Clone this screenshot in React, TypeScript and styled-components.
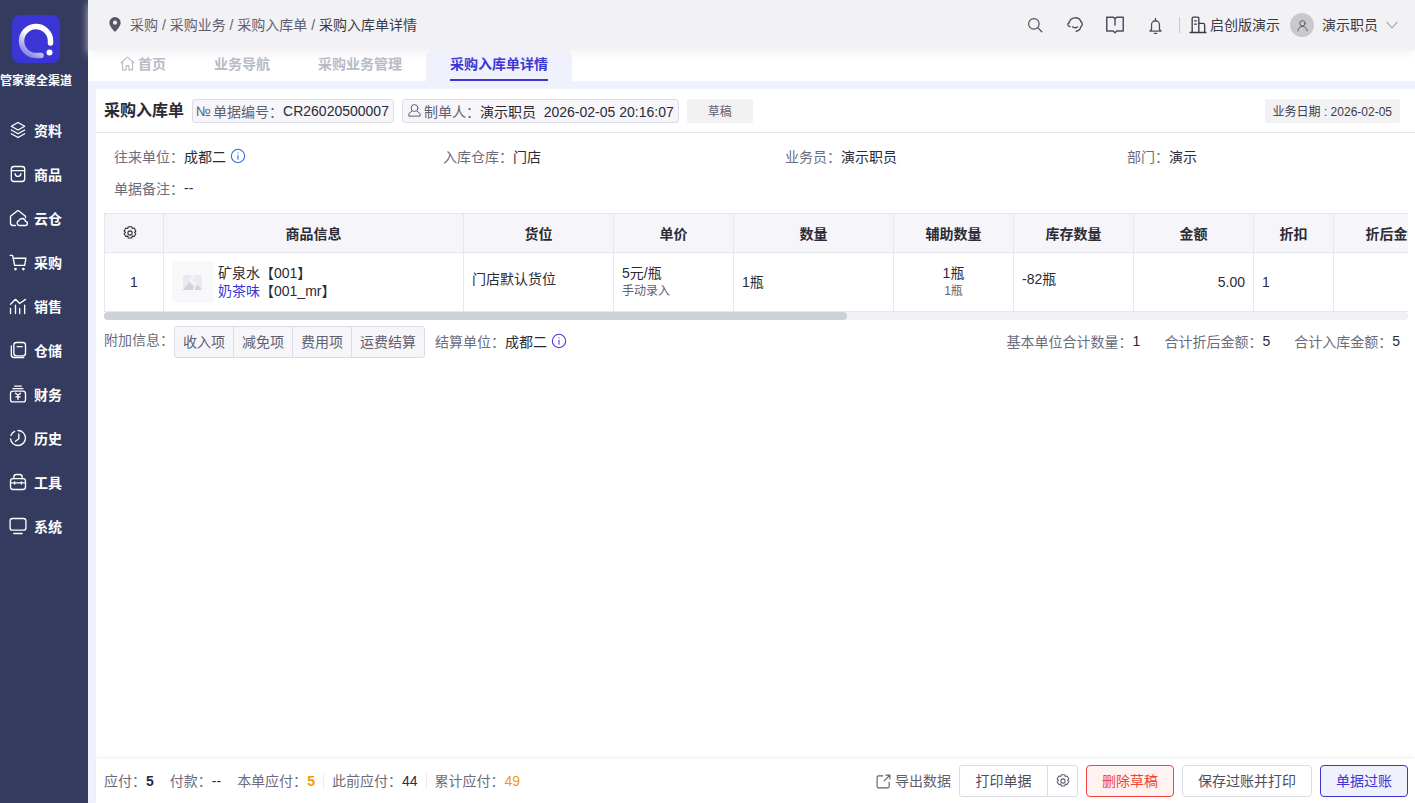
import styled, { createGlobalStyle } from 'styled-components'
import type { ReactNode } from 'react'

const GlobalStyle = createGlobalStyle`
	html, body, #root {
		margin: 0;
		height: 100%;
	}

	body {
		overflow: hidden;
		font-family: "Liberation Sans", "Noto Sans CJK SC", sans-serif;
		font-size: 14px;
		color: #2b2b36;
		background: #fff;
	}

	* {
		box-sizing: border-box;
	}
`

const Line = ({ children, size = 18 }: { children: ReactNode; size?: number }) => (
	<svg
		width={size}
		height={size}
		viewBox="0 0 24 24"
		fill="none"
		stroke="currentColor"
		strokeWidth="1.6"
		strokeLinecap="round"
		strokeLinejoin="round">
		{children}
	</svg>
)

const navItems: { label: string; icon: ReactNode }[] = [
	{
		label: '资料',
		icon: (
			<>
				<path d="M12 3l8 4.5-8 4.5-8-4.5z" />
				<path d="M4 12l8 4.5 8-4.5" />
				<path d="M4 16.5l8 4.5 8-4.5" />
			</>
		),
	},
	{
		label: '商品',
		icon: (
			<>
				<rect x="4" y="3" width="16" height="18" rx="3" />
				<path d="M4 8h16" />
				<path d="M8.5 11.5c.5 4.5 6.5 4.5 7 0" />
			</>
		),
	},
	{
		label: '云仓',
		icon: (
			<>
				<path d="M9 21H6a3 3 0 0 1-3-3V10L11 3.5a2 2 0 0 1 2 0l8 6.5v1.5" />
				<path d="M13.5 21a3 3 0 0 1-.5-5.8 4.2 4.2 0 0 1 8 .8A2.5 2.5 0 0 1 20.5 21z" />
			</>
		),
	},
	{
		label: '采购',
		icon: (
			<>
				<path d="M2.5 4h3l2.5 12h12L21.5 7.5H6" />
				<circle cx="9" cy="20.5" r=".8" />
				<circle cx="18.5" cy="20.5" r=".8" />
			</>
		),
	},
	{
		label: '销售',
		icon: (
			<>
				<path d="M3 10l6-6 5 5 7-5" />
				<path d="M3 15v6M9 11v10M14 15v6M20 11v10" />
			</>
		),
	},
	{
		label: '仓储',
		icon: (
			<>
				<rect x="7" y="3" width="14" height="16" rx="3" />
				<path d="M4 7v11a3 3 0 0 0 3 3h12" />
				<path d="M11 8h6" />
			</>
		),
	},
	{
		label: '财务',
		icon: (
			<>
				<path d="M8 2.5h8M6 5.5h12" />
				<rect x="3" y="8.5" width="18" height="13" rx="3" />
				<path d="M9 11l3 2.5 3-2.5M12 13.5v5M9.5 15.5h5" />
			</>
		),
	},
	{
		label: '历史',
		icon: (
			<>
				<path d="M12 3a9 9 0 1 1-9 10" />
				<path d="M3.5 9A9 9 0 0 1 8 4" />
				<path d="M13 7v6l-4 3" />
			</>
		),
	},
	{
		label: '工具',
		icon: (
			<>
				<rect x="3" y="8" width="18" height="13" rx="3" />
				<path d="M7 8V6a3 3 0 0 1 3-3h4a3 3 0 0 1 3 3v2" />
				<path d="M3 13h18M8 12v2.5M16 12v2.5" />
			</>
		),
	},
	{
		label: '系统',
		icon: (
			<>
				<rect x="2.5" y="3" width="19" height="14" rx="3" />
				<path d="M7 21h10" />
			</>
		),
	},
]

const tabs = ['业务导航', '采购业务管理']

const columns = [
	{ title: '商品信息', width: 300 },
	{ title: '货位', width: 150 },
	{ title: '单价', width: 120 },
	{ title: '数量', width: 160 },
	{ title: '辅助数量', width: 120 },
	{ title: '库存数量', width: 120 },
	{ title: '金额', width: 120 },
	{ title: '折扣', width: 80 },
	{ title: '折后金额', width: 120 },
]

const Gear = ({ size = 16 }: { size?: number }) => (
	<Line size={size}>
		<path d="M9.4 2.5h5.2l.8 2.8 2.8-.7 2.6 4.4-2 2 2 2-2.6 4.4-2.8-.7-.8 2.8H9.4l-.8-2.8-2.8.7-2.6-4.4 2-2-2-2 2.6-4.4 2.8.7z" />
		<circle cx="12" cy="12" r="3.2" />
	</Line>
)

const Info = () => (
	<Line size={16}>
		<circle cx="12" cy="12" r="10" />
		<path d="M12 11v6M12 7.2v.3" />
	</Line>
)

function App() {
	return (
		<Page>
			<GlobalStyle />
			<Sidebar>
				<Logo>
					<svg width="48" height="48" viewBox="0 0 48 48">
						<defs>
							<linearGradient id="ring" x1="0.9" y1="0.1" x2="0.3" y2="1">
								<stop offset="0.45" stopColor="#ffffff" />
								<stop offset="1" stopColor="#8f8be8" />
							</linearGradient>
						</defs>
						<rect width="48" height="48" rx="8" fill="#3b35d6" />
						<path
							d="M38.5 28V25a14.5 14.5 0 1 0-14.5 15.5h5"
							fill="none"
							stroke="url(#ring)"
							strokeWidth="5.5"
							strokeLinecap="round"
						/>
						<circle cx="37.5" cy="37.5" r="3" fill="#fff" />
					</svg>
					<LogoText>管家婆全渠道</LogoText>
				</Logo>
				<Nav>
					{navItems.map(item => (
						<NavItem key={item.label}>
							<Line size={20}>{item.icon}</Line>
							<span>{item.label}</span>
						</NavItem>
					))}
				</Nav>
			</Sidebar>
			<Main>
				<TopBar>
					<Crumbs>
						<svg width="14" height="15" viewBox="0 0 14 16">
							<path
								fillRule="evenodd"
								d="M7 0a6 6 0 0 1 6 6c0 4-4.5 8-6 10C5.5 14 1 10 1 6a6 6 0 0 1 6-6zm0 3.8a2.2 2.2 0 1 0 0 4.4 2.2 2.2 0 0 0 0-4.4z"
								fill="#55566a"
							/>
						</svg>
						<CrumbText>
							采购 / 采购业务 / 采购入库单 / <Current>采购入库单详情</Current>
						</CrumbText>
					</Crumbs>
					<TopTools>
						<ToolIcon>
							<Line size={18}>
								<circle cx="10.5" cy="10.5" r="7" />
								<path d="M15.5 15.5L21 21" />
							</Line>
						</ToolIcon>
						<ToolIcon>
							<Line size={20}>
								<path d="M5 9.5a7.5 7.5 0 0 1 14.5-1" />
								<path d="M4.5 9.5c-2 1-1.5 4 1.5 4.5" />
								<path d="M19.5 8.5c1.8 1 1.8 4-.5 5.5-.5 3-3 5-5.5 5.5" />
								<path d="M9 14c2 1.5 4.5 1.5 6 0" />
							</Line>
						</ToolIcon>
						<ToolIcon>
							<Line size={22}>
								<path d="M3 3.5h7l2 1.5 2-1.5h7v15h-7l-2 2-2-2H3z" />
								<path d="M12 5v7" />
							</Line>
						</ToolIcon>
						<ToolIcon>
							<Line size={19}>
								<path d="M7 17v-6a5 5 0 0 1 10 0v6l2 2H5z" />
								<path d="M12 3v3M10.5 22h3" />
							</Line>
						</ToolIcon>
						<Divider />
						<Company>
							<Line size={20}>
								<path d="M5 21V4a1.5 1.5 0 0 1 1.5-1.5h5A1.5 1.5 0 0 1 13 4v17" />
								<path d="M13 10h5a2 2 0 0 1 2 2v9" />
								<path d="M2.5 21h19M8 7h2M8 11h2" />
							</Line>
							<span>启创版演示</span>
						</Company>
						<Avatar>
							<Line size={13}>
								<circle cx="12" cy="8" r="5" />
								<path d="M3.5 22a8.5 8.5 0 0 1 17 0" />
							</Line>
						</Avatar>
						<UserName>演示职员</UserName>
						<Chevron>
							<Line size={14}>
								<path d="M3 7l9 10 9-10" />
							</Line>
						</Chevron>
					</TopTools>
				</TopBar>
				<TabBar>
					<Tab>
						<Line size={17}>
							<path d="M3 11l9-8 9 8" />
							<path d="M5 9.5V21h5v-6h4v6h5V9.5" />
						</Line>
						首页
					</Tab>
					{tabs.map(tab => (
						<Tab key={tab}>{tab}</Tab>
					))}
					<ActiveTab>
						<span>采购入库单详情</span>
					</ActiveTab>
				</TabBar>
				<Gutter>
					<Sheet>
						<SheetHead>
							<SheetTitle>采购入库单</SheetTitle>
							<Chip>
								<ChipLabel>
									<NoMark>№</NoMark>单据编号：
								</ChipLabel>
								CR26020500007
							</Chip>
							<Chip>
								<ChipLabel>
									<Line size={15}>
										<circle cx="12" cy="8" r="5.5" />
										<path d="M8 13l-5 4v4h18v-4l-5-4" />
									</Line>
									<ChipText>制单人：</ChipText>
								</ChipLabel>
								演示职员&nbsp;&nbsp;2026-02-05 20:16:07
							</Chip>
							<Status>草稿</Status>
							<DateTag>业务日期 : 2026-02-05</DateTag>
						</SheetHead>
						<Fields>
							<Field>
								<FieldLabel>往来单位：</FieldLabel>
								<span>成都二</span>
								<InfoMark $color="#2f6fd6">
									<Info />
								</InfoMark>
							</Field>
							<Field>
								<FieldLabel>入库仓库：</FieldLabel>
								<span>门店</span>
							</Field>
							<Field>
								<FieldLabel>业务员：</FieldLabel>
								<span>演示职员</span>
							</Field>
							<Field>
								<FieldLabel>部门：</FieldLabel>
								<span>演示</span>
							</Field>
							<Field>
								<FieldLabel>单据备注：</FieldLabel>
								<span>--</span>
							</Field>
						</Fields>
						<TableWrap>
							<Table>
								<colgroup>
									<col width={59} />
									{columns.map(col => (
										<col key={col.title} width={col.width} />
									))}
								</colgroup>
								<thead>
									<tr>
										<Th>
											<GearCell>
												<Gear />
											</GearCell>
										</Th>
										{columns.map(col => (
											<Th key={col.title}>{col.title}</Th>
										))}
									</tr>
								</thead>
								<tbody>
									<tr>
										<Td $align="center">1</Td>
										<Td>
											<Product>
												<Thumb>
													<svg width="42" height="42" viewBox="0 0 42 42">
														<path d="M4 29h8M31 27h7M15 32h8" stroke="#eef0f4" />
														<rect x="11" y="14" width="19" height="15" rx="1" fill="#e8ebf2" />
														<path d="M11 29l6-8 5 5 3-3 5 6z" fill="#cfd4df" />
														<path d="M22 13l-3 7 5 3-3 7" stroke="#f8f8fb" strokeWidth="1.5" fill="none" />
													</svg>
												</Thumb>
												<div>
													<ProductName>矿泉水【001】</ProductName>
													<ProductName>
														<Sku>奶茶味</Sku>【001_mr】
													</ProductName>
												</div>
											</Product>
										</Td>
										<Td>
											<Nudge>门店默认货位</Nudge>
										</Td>
										<Td>
											<div>5元/瓶</div>
											<SubText>手动录入</SubText>
										</Td>
										<Td>1瓶</Td>
										<Td $align="center">
											<div>1瓶</div>
											<SubText>1瓶</SubText>
										</Td>
										<Td>
											<Nudge>-82瓶</Nudge>
										</Td>
										<Td $align="right">5.00</Td>
										<Td>1</Td>
										<Td />
									</tr>
								</tbody>
							</Table>
						</TableWrap>
						<ScrollTrack>
							<ScrollThumb />
						</ScrollTrack>
						<Extras>
							<ExtraLabel>附加信息：</ExtraLabel>
							<ExtraGroup>
								<ExtraButton>收入项</ExtraButton>
								<ExtraButton>减免项</ExtraButton>
								<ExtraButton>费用项</ExtraButton>
								<ExtraButton>运费结算</ExtraButton>
							</ExtraGroup>
							<Field>
								<FieldLabel>结算单位：</FieldLabel>
								<span>成都二</span>
								<InfoMark $color="#5b2fd6">
									<Info />
								</InfoMark>
							</Field>
							<Totals>
								<Field>
									<FieldLabel>基本单位合计数量：</FieldLabel>
									<span>1</span>
								</Field>
								<Field>
									<FieldLabel>合计折后金额：</FieldLabel>
									<span>5</span>
								</Field>
								<Field>
									<FieldLabel>合计入库金额：</FieldLabel>
									<span>5</span>
								</Field>
							</Totals>
						</Extras>
						<Spacer />
						<Footer>
							<Sums>
								<Sum>
									<FieldLabel>应付：</FieldLabel>
									<SumValue $bold>5</SumValue>
								</Sum>
								<Sum>
									<FieldLabel>付款：</FieldLabel>
									<SumValue>--</SumValue>
								</Sum>
								<Sum>
									<FieldLabel>本单应付：</FieldLabel>
									<SumValue $bold $color="#f59a0b">
										5
									</SumValue>
								</Sum>
								<Sum $split>
									<FieldLabel>此前应付：</FieldLabel>
									<SumValue>44</SumValue>
								</Sum>
								<Sum $split>
									<FieldLabel>累计应付：</FieldLabel>
									<SumValue $color="#f59a0b">49</SumValue>
								</Sum>
							</Sums>
							<Actions>
								<Export>
									<Line size={17}>
										<path d="M11 4H5a2 2 0 0 0-2 2v13a2 2 0 0 0 2 2h13a2 2 0 0 0 2-2v-6" />
										<path d="M13 11l8-8M15.5 3H21v5.5" />
									</Line>
									<span>导出数据</span>
								</Export>
								<PrintGroup>
									<PrintMain>打印单据</PrintMain>
									<PrintGear>
										<Gear />
									</PrintGear>
								</PrintGroup>
								<ActionButton $kind="danger">删除草稿</ActionButton>
								<ActionButton>保存过账并打印</ActionButton>
								<ActionButton $kind="primary">单据过账</ActionButton>
							</Actions>
						</Footer>
					</Sheet>
				</Gutter>
			</Main>
		</Page>
	)
}

const Page = styled.div`
	display: flex;
	height: 803px;
	width: 1415px;
	overflow: hidden;
`

const Sidebar = styled.aside`
	width: 88px;
	flex: none;
	background: #343b5e;
	color: #fff;
`

const Logo = styled.div`
	display: flex;
	flex-direction: column;
	align-items: center;
	width: 72px;
	padding-top: 15px;
	height: 108px;
`

const LogoText = styled.div`
	margin-top: 10px;
	white-space: nowrap;
	font-size: 12px;
	line-height: 16px;
	font-weight: 700;
	text-align: center;
`

const Nav = styled.nav`
	display: flex;
	flex-direction: column;
`

const NavItem = styled.div`
	height: 44px;
	display: flex;
	align-items: center;
	gap: 6px;
	padding: 0 0 1px 8px;
	font-size: 14px;
	font-weight: 700;
`

const Main = styled.main`
	flex: 1;
	min-width: 0;
	display: flex;
	flex-direction: column;
	background: #fff;
`

const TopBar = styled.header`
	height: 50px;
	flex: none;
	display: flex;
	align-items: center;
	justify-content: space-between;
	padding: 0 16px 0 20px;
	background: #f2f2f5;
	box-shadow: 0 4px 8px rgba(240, 240, 245, 0.7);
	position: relative;
`

const Crumbs = styled.div`
	display: flex;
	align-items: center;
	gap: 8px;
	margin-top: -2px;
`

const CrumbText = styled.div`
	font-size: 14px;
	color: #5f5f70;
	white-space: pre;
`

const Current = styled.span`
	color: #3a3a48;
`

const TopTools = styled.div`
	display: flex;
	align-items: center;
	color: #4d4d62;
`

const ToolIcon = styled.div`
	width: 40px;
	display: flex;
	justify-content: center;
`

const Divider = styled.div`
	width: 1px;
	height: 16px;
	margin: 0 8px 0 4px;
	background: #c3c6e0;
`

const Company = styled.div`
	display: flex;
	align-items: center;
	gap: 2px;
	font-size: 14px;
	color: #3a3a48;

	span {
		margin-top: -2px;
	}
`

const Avatar = styled.div`
	width: 24px;
	height: 24px;
	margin: 0 8px 0 10px;
	border-radius: 50%;
	background: #c9c9cc;
	color: #4d4d62;
	display: flex;
	align-items: center;
	justify-content: center;
`

const UserName = styled.span`
	margin-top: -2px;
	font-size: 14px;
	color: #3a3a48;
`

const Chevron = styled.span`
	display: flex;
	margin-left: 7px;
	color: #77778a;
`

const TabBar = styled.div`
	height: 31px;
	flex: none;
	display: flex;
	padding-left: 8px;
	background: #fff;
`

const Tab = styled.div`
	display: flex;
	align-items: center;
	justify-content: center;
	gap: 2px;
	padding: 0 24px 5px;
	font-size: 14px;
	font-weight: 700;
	color: #b6bbc6;

	svg {
		margin-left: -1px;
	}
`

const ActiveTab = styled.div`
	display: flex;
	align-items: stretch;
	padding: 0 24px;
	background: #eff1fd;
	border-radius: 8px 8px 0 0;
	font-size: 14px;
	font-weight: 700;
	color: #3b35d6;

	span {
		display: flex;
		align-items: center;
		padding-bottom: 3px;
		border-bottom: 2px solid #3b35d6;
	}
`

const Gutter = styled.div`
	flex: 1;
	min-height: 0;
	padding: 8px 0 0 8px;
	background: #eff1fd;
`

const Sheet = styled.div`
	height: 100%;
	display: flex;
	flex-direction: column;
	background: #fff;
`

const SheetHead = styled.div`
	height: 44px;
	flex: none;
	display: flex;
	align-items: center;
	gap: 8px;
	padding: 0 15px 0 8px;
	border-bottom: 1px solid #e6e6ee;
`

const SheetTitle = styled.h1`
	margin: 0 0 3px;
	font-size: 16px;
	font-weight: 700;
	color: #2b2b36;
`

const Chip = styled.div`
	height: 24px;
	display: flex;
	align-items: center;
	padding: 0 4px;
	border: 1px solid #dcdce6;
	border-radius: 3px;
	background: #f6f6fa;
	white-space: pre;
	color: #2b2b36;
`

const ChipLabel = styled.span`
	display: flex;
	align-items: center;
	color: #5f5f70;
`

const NoMark = styled.span`
	margin: 0 2px 0 -1px;
`

const ChipText = styled.span`
	margin-left: 2px;
`

const Status = styled.div`
	width: 66px;
	height: 24px;
	display: flex;
	align-items: center;
	justify-content: center;
	border-radius: 2px;
	background: #f2f2f5;
	font-size: 12px;
	color: #5f5f70;
`

const DateTag = styled.div`
	margin-left: auto;
	height: 24px;
	display: flex;
	align-items: center;
	padding: 0 8px;
	border-radius: 2px;
	background: #f2f2f5;
	font-size: 12px;
	color: #3a3a48;
`

const Fields = styled.div`
	display: grid;
	grid-template-columns: 329px 342px 342px 1fr;
	grid-auto-rows: 32px;
	padding: 8px 18px 0;
	flex: none;
`

const Field = styled.div`
	display: flex;
	align-items: center;
	padding-bottom: 2px;
	font-size: 14px;
	color: #2b2b36;
	white-space: nowrap;
`

const FieldLabel = styled.span`
	color: #6c6c7c;
`

const InfoMark = styled.span<{ $color: string }>`
	display: flex;
	margin-left: 4px;
	color: ${p => p.$color};
`

const TableWrap = styled.div`
	margin: 8px 7px 0 8px;
	overflow: hidden;
	flex: none;
`

const Table = styled.table`
	border-collapse: collapse;
	table-layout: fixed;
	width: 1329px;
`

const Th = styled.th`
	height: 39px;
	padding: 0;
	border: 1px solid #e6e6ee;
	background: #f6f6fa;
	font-size: 14px;
	font-weight: 700;
	text-align: center;
	color: #2b2b36;
`

const GearCell = styled.div`
	display: flex;
	justify-content: center;
	padding-right: 8px;
`

const Td = styled.td<{ $align?: string }>`
	height: 59px;
	padding: 0 8px;
	border: 1px solid #e6e6ee;
	font-size: 14px;
	line-height: 18px;
	text-align: ${p => p.$align ?? 'left'};
	color: #2b2b36;
	vertical-align: middle;
`

const Nudge = styled.div`
	margin-bottom: 6px;
`

const Product = styled.div`
	display: flex;
	align-items: center;
	gap: 4px;
`

const Thumb = styled.div`
	width: 42px;
	height: 42px;
	flex: none;
	display: flex;
	align-items: center;
	justify-content: center;
	border-radius: 4px;
	background: #f8f8fb;
`

const ProductName = styled.div`
	line-height: 18px;
`

const Sku = styled.span`
	color: #3b35d6;
`

const SubText = styled.div`
	margin: 1px 0;
	font-size: 12px;
	line-height: 16px;
	color: #5f5f70;
`

const ScrollTrack = styled.div`
	height: 8px;
	margin: 0 7px 0 8px;
	flex: none;
	border-radius: 4px;
	background: #f0f1f4;
`

const ScrollThumb = styled.div`
	width: 743px;
	height: 8px;
	border-radius: 4px;
	background: #cdd2da;
`

const Extras = styled.div`
	display: flex;
	align-items: center;
	margin-top: 6px;
	padding: 0 15px 0 8px;
	flex: none;
`

const ExtraLabel = styled.span`
	width: 70px;
	margin-top: -6px;
	font-size: 14px;
	white-space: nowrap;
	color: #6c6c7c;
`

const ExtraGroup = styled.div`
	display: flex;
	margin-right: 10px;
	border: 1px solid #dcdce6;
	border-radius: 3px;
	background: #f6f6fa;
`

const ExtraButton = styled.div`
	height: 30px;
	padding: 0 8px 2px;
	display: flex;
	align-items: center;
	font-size: 14px;
	color: #5f5f70;

	& + & {
		border-left: 1px solid #dcdce6;
	}
`

const Totals = styled.div`
	margin-left: auto;
	display: flex;
	gap: 24px;
`

const Spacer = styled.div`
	flex: 1;
`

const Footer = styled.footer`
	height: 44px;
	flex: none;
	display: flex;
	align-items: center;
	justify-content: space-between;
	padding: 0 7px 0 8px;
	box-shadow: 0 -2px 4px rgba(0, 0, 0, 0.05);
`

const Sums = styled.div`
	display: flex;
	align-items: center;
`

const Sum = styled.div<{ $split?: boolean }>`
	display: flex;
	align-items: center;
	font-size: 14px;
	margin-right: 16px;
	line-height: 16px;

	${p =>
		p.$split &&
		`
		margin-left: -8px;
		padding-left: 8px;
		border-left: 1px solid #ececf2;
	`}
`

const SumValue = styled.span<{ $bold?: boolean; $color?: string }>`
	font-weight: ${p => (p.$bold ? 700 : 400)};
	color: ${p => p.$color ?? '#2b2b4a'};
`

const Actions = styled.div`
	display: flex;
	align-items: center;
	gap: 8px;
`

const Export = styled.div`
	display: flex;
	align-items: center;
	gap: 3px;
	font-size: 14px;
	color: #5f5f70;

	span {
		margin-top: -2px;
	}
`

const PrintGroup = styled.div`
	display: flex;
	height: 32px;
	border: 1px solid #dcdce6;
	border-radius: 3px;
	background: #fff;
`

const PrintMain = styled.div`
	width: 87px;
	padding-bottom: 2px;
	display: flex;
	align-items: center;
	justify-content: center;
	font-size: 14px;
	color: #4d4d5c;
`

const PrintGear = styled.div`
	width: 30px;
	display: flex;
	align-items: center;
	justify-content: center;
	border-left: 1px solid #dcdce6;
	color: #5f5f70;
`

const kinds = {
	plain: { border: '#dcdce6', bg: '#fff', fg: '#4d4d5c' },
	danger: { border: '#f0443a', bg: '#fff2f0', fg: '#f0443a' },
	primary: { border: '#3b35d6', bg: '#eff1fd', fg: '#3b35d6' },
}

const ActionButton = styled.div<{ $kind?: keyof typeof kinds }>`
	height: 32px;
	display: flex;
	align-items: center;
	padding: 0 15px 2px;
	border: 1px solid ${p => kinds[p.$kind ?? 'plain'].border};
	border-radius: 4px;
	background: ${p => kinds[p.$kind ?? 'plain'].bg};
	font-size: 14px;
	color: ${p => kinds[p.$kind ?? 'plain'].fg};
`

export default App
